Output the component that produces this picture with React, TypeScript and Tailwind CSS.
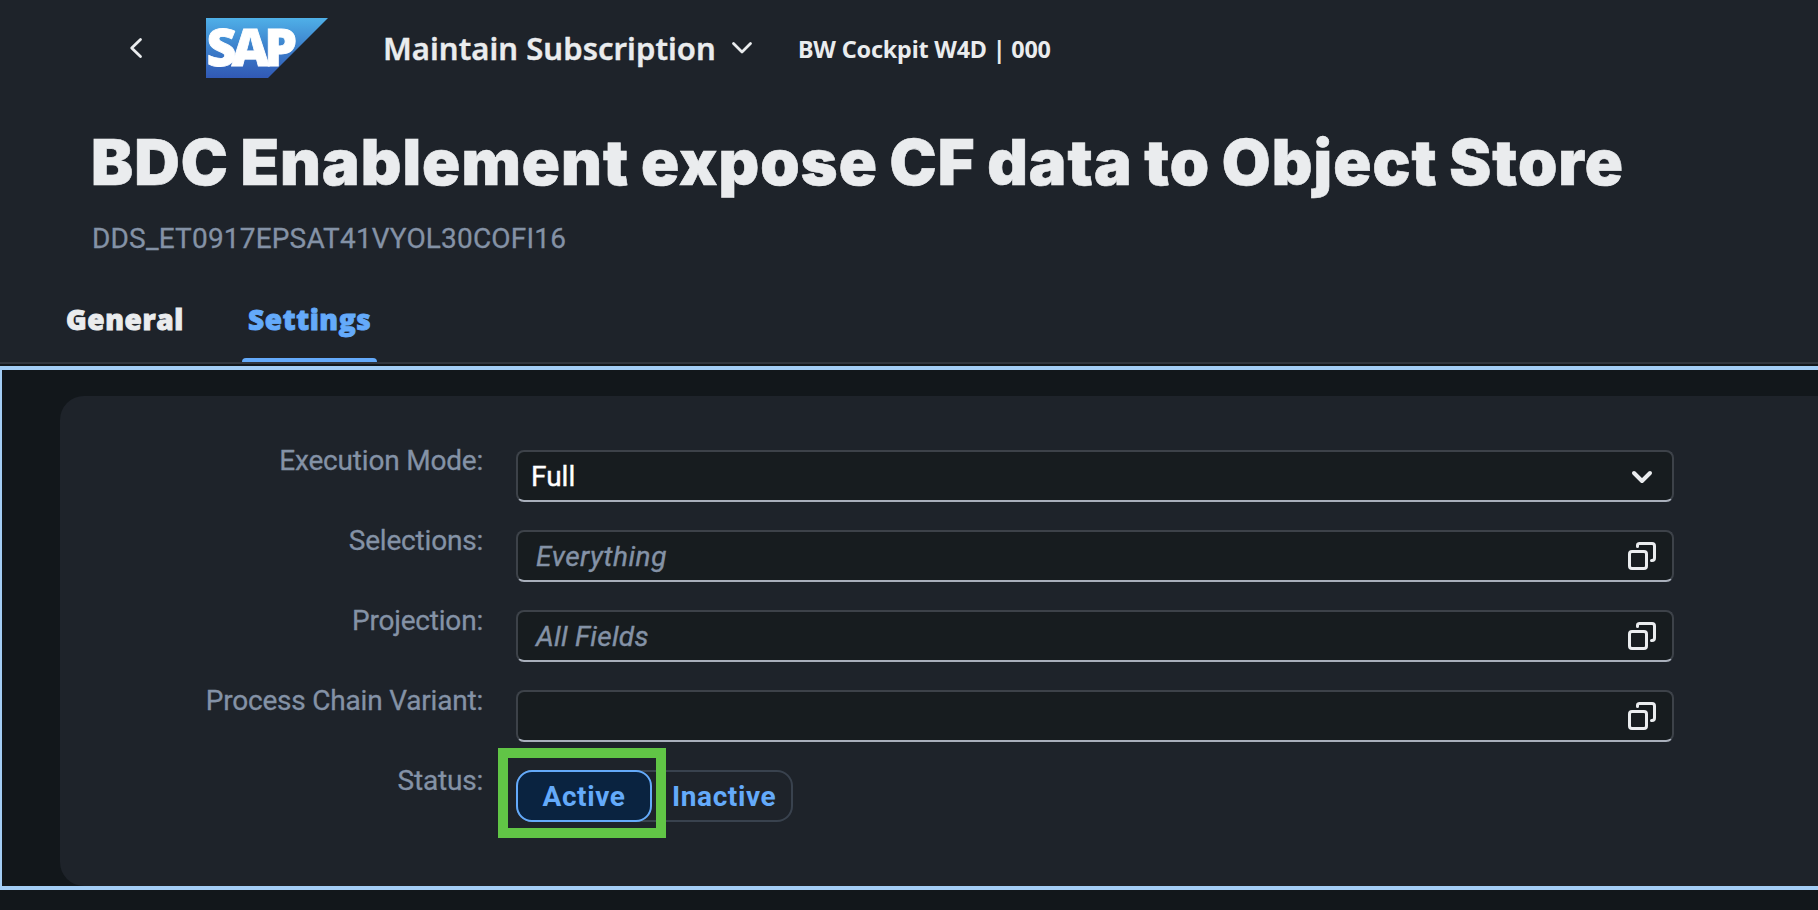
import React from "react";

function SapLogo() {
  return (
    <svg width="122" height="60" viewBox="0 0 122 60" className="block shrink-0 overflow-visible">
      <defs>
        <linearGradient id="sapBlue" x1="0" y1="0" x2="0" y2="1">
          <stop offset="0" stopColor="#4fb0e8" />
          <stop offset="0.5" stopColor="#3c7fcb" />
          <stop offset="1" stopColor="#3159b5" />
        </linearGradient>
      </defs>
      <path d="M0 0H122L62 60H0Z" fill="url(#sapBlue)" />
      <text x="0.5" y="48" fill="#fff" fontFamily="Noto Sans, sans-serif" fontWeight="900" fontSize="52" letterSpacing="-5" stroke="#fff" strokeWidth="0.8">
        SAP
      </text>
    </svg>
  );
}

function ValueHelpIcon() {
  return (
    <svg width="28" height="28" viewBox="0 0 28 28" fill="none" stroke="#eaecee" strokeWidth="3" strokeLinecap="round">
      <rect x="1.5" y="9.5" width="17" height="17" rx="2.5" />
      <path d="M9.5 4.5V3.2Q9.5 1.5 11.5 1.5H24Q26.5 1.5 26.5 4V16Q26.5 18.5 24 18.5H23.5" />
    </svg>
  );
}

function SelectArrow() {
  return (
    <svg width="28" height="28" viewBox="0 0 28 28" fill="none" stroke="#eaecee" strokeWidth="4" strokeLinecap="round" strokeLinejoin="round">
      <path d="M6 11L14 19L22 11" />
    </svg>
  );
}

function Row({ label, children }: { label: string; children: React.ReactNode }) {
  return (
    <div className="flex h-20">
      <div className="-mt-[9px] h-10 w-[423px] shrink-0 text-right text-[28px] leading-10 tracking-[-0.2px] text-[#8492a6] [-webkit-text-stroke:0.3px_currentColor]">{label}</div>
      <div className="ml-[33px] flex h-[52px]">{children}</div>
    </div>
  );
}

function Field({ children, icon }: { children?: React.ReactNode; icon: React.ReactNode }) {
  return (
    <div className="flex h-[52px] w-[1158px] items-center justify-between overflow-hidden rounded-[8px] border-2 border-[#3d4249] border-b-[#a9afbb] bg-[#171c1f] pr-4">
      <div className="pt-0.5 text-[28px] leading-10 [-webkit-text-stroke:0.4px_currentColor]">{children}</div>
      {icon}
    </div>
  );
}

export default function App() {
  return (
    <div className="flex h-[910px] w-[1818px] flex-col overflow-hidden bg-[#12171b] font-['Roboto',sans-serif] text-[#eaecee]">
      <header className="h-[364px] shrink-0 border-b-2 border-[#31363e] bg-[#1e232a]">
        <div className="flex h-24 items-center whitespace-nowrap font-['Noto_Sans',sans-serif] font-semibold">
          <svg width="16" height="24" viewBox="0 0 16 24" className="ml-32" fill="none" stroke="#eaecee" strokeWidth="2.8" strokeLinecap="round" strokeLinejoin="round">
            <path d="M12.5 3.5L3.7 12L12.5 20.5" />
          </svg>
          <div className="ml-[62px]">
            <SapLogo />
          </div>
          <span className="ml-[55px] w-[332px] text-[31px] leading-10 tracking-[0.05px] [-webkit-text-stroke:0.4px_currentColor]">Maintain Subscription</span>
          <svg width="24" height="16" viewBox="0 0 24 16" className="ml-[15px]" fill="none" stroke="#eaecee" strokeWidth="2.8" strokeLinecap="round" strokeLinejoin="round">
            <path d="M3.5 3.5L12 12L20.5 3.5" />
          </svg>
          <span className="ml-11 pt-0.5 text-[23.4px] font-bold leading-10 tracking-[-0.2px]">BW Cockpit W4D | 000</span>
        </div>
        <h1 className="ml-[91px] mt-[26px] h-20 whitespace-nowrap font-['Inter',sans-serif] text-[63px] font-black leading-[80px] tracking-[1.05px] [-webkit-text-stroke:0.6px_currentColor] [word-spacing:-2px]">
          BDC Enablement expose CF data to Object Store
        </h1>
        <p className="ml-[92px] mt-[17px] h-10 text-[28px] leading-10 tracking-[0.18px] text-[#8492a6] [-webkit-text-stroke:0.3px_currentColor]">DDS_ET0917EPSAT41VYOL30COFI16</p>
        <nav className="mt-[19px] flex h-[84px] font-['Open_Sans',sans-serif] text-[28px] font-extrabold leading-10 tracking-[0.6px] [-webkit-text-stroke:0.9px_currentColor]">
          <div className="ml-[60px] w-[182px] pl-1.5 pt-[21px]">General</div>
          <div className="flex w-[135px] flex-col justify-between pt-[21px] text-[#64aafa]">
            <span className="pl-1.5">Settings</span>
            <div className="h-1 rounded-t-[4px] bg-[#64aafa]" />
          </div>
        </nav>
      </header>
      <main className="mt-0.5 flex h-[524px] shrink-0 flex-col overflow-hidden border-y-4 border-l-2 border-[#a3cdf5] pl-[58px] pt-[26px]">
        <section className="h-[490px] shrink-0 rounded-l-[24px] bg-[#1e232a] pt-[54px]">
          <Row label="Execution Mode:">
            <Field icon={<SelectArrow />}>
              <span className="pl-[13px] text-white">Full</span>
            </Field>
          </Row>
          <Row label="Selections:">
            <Field icon={<ValueHelpIcon />}>
              <span className="pl-[18px] italic tracking-[0.55px] text-[#8492a6]">Everything</span>
            </Field>
          </Row>
          <Row label="Projection:">
            <Field icon={<ValueHelpIcon />}>
              <span className="pl-[18px] italic tracking-[0.3px] text-[#8492a6]">All Fields</span>
            </Field>
          </Row>
          <Row label="Process Chain Variant:">
            <Field icon={<ValueHelpIcon />} />
          </Row>
          <Row label="Status:">
            <div className="relative flex w-[277px] rounded-[16px] text-[28px] font-bold leading-[50px] tracking-[0.6px] text-[#64aafa] shadow-[inset_0_0_0_2px_#39424e]">
              <div className="w-[136px] rounded-[16px] border-2 border-[#64aafa] bg-[#0a2340] text-center">Active</div>
              <div className="pl-5 pt-0.5">Inactive</div>
              <div className="absolute -left-[18px] -top-[22px] h-[90px] w-[168px] border-[10px] border-[#61c546]" />
            </div>
          </Row>
        </section>
      </main>
    </div>
  );
}
